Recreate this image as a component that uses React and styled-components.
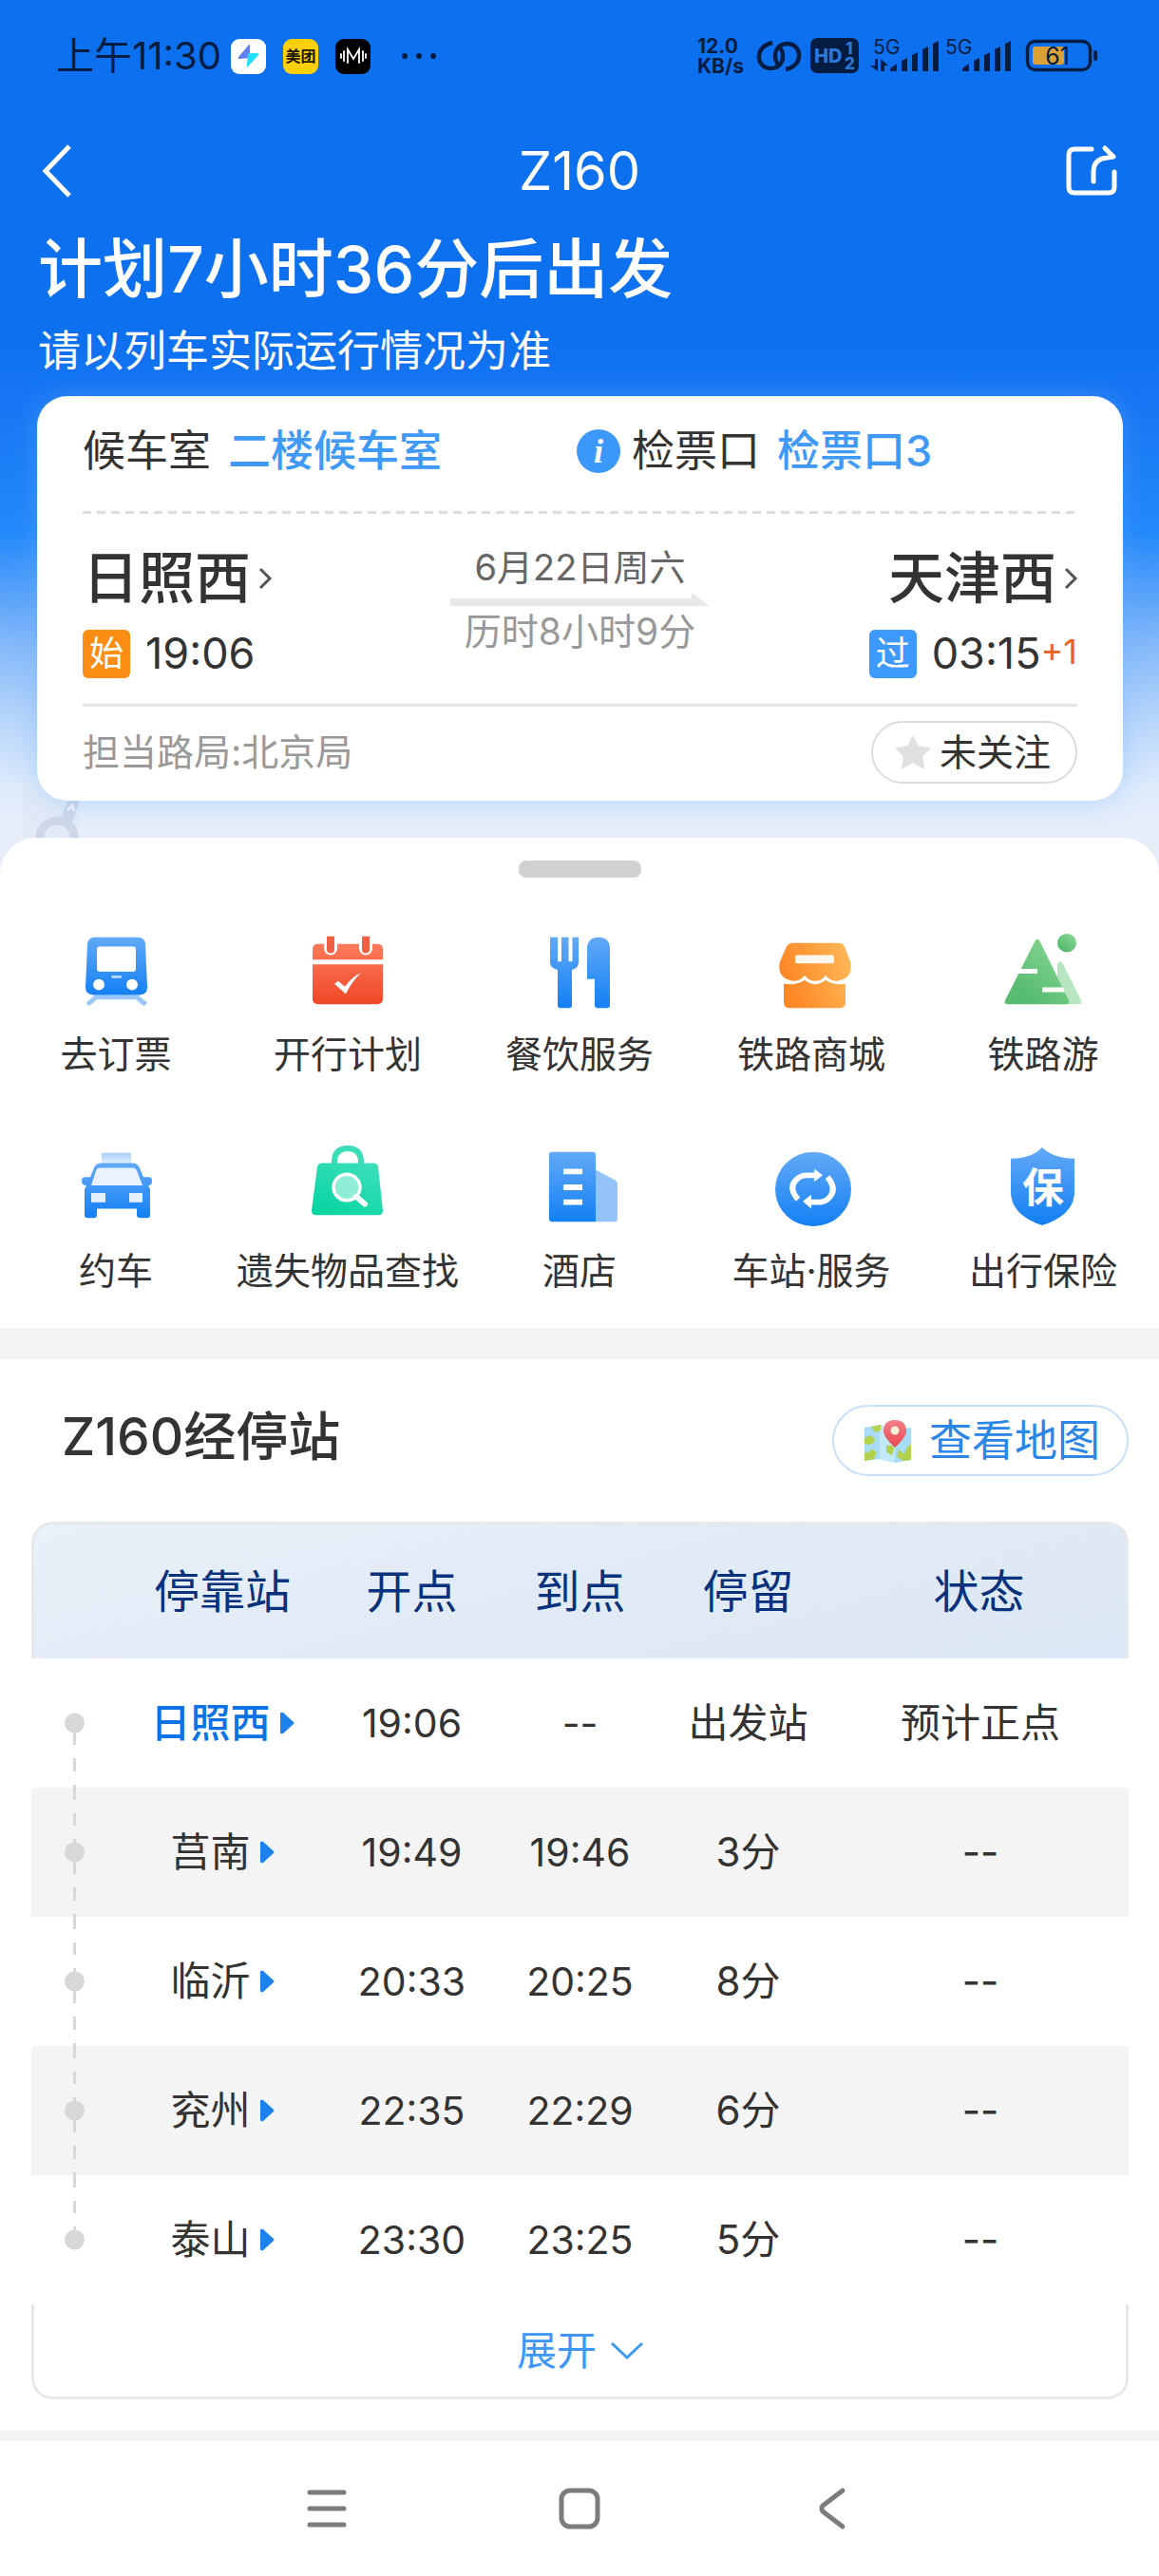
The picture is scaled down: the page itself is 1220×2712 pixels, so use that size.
import React from "react";
import styled, { createGlobalStyle } from "styled-components";

const GlobalStyle = createGlobalStyle`
  *, *::before, *::after { box-sizing: border-box; }
  body {
    margin: 0;
    background: #fff;
    color: #333;
    font-family: Inter, "Noto Sans CJK SC", sans-serif;
  }
  button {
    border: 0;
    padding: 0;
    background: none;
    color: inherit;
    font: inherit;
    cursor: pointer;
  }
  a { color: inherit; text-decoration: none; }
  h1, h2, p { margin: 0; }
  svg { display: block; flex: none; overflow: visible; }
`;

const INK = "#031d42";

/* ---------- status bar ---------- */

const StatusBar = styled.div`
  display: flex;
  align-items: center;
  justify-content: space-between;
  height: 118px;
  padding: 0 65px 0 59px;
  color: ${INK};
`;

const StatusGroup = styled.div`
  display: flex;
  align-items: center;
  gap: ${(p) => p.$gap}px;
`;

const Clock = styled.time`
  font-size: 40px;
  line-height: 48px;
`;

const AppBadge = styled.span`
  display: grid;
  place-items: center;
  width: 37px;
  height: 37px;
  border-radius: 9px;
  background: ${(p) => p.$bg};
  color: #1c1600;
  font-size: 16px;
  line-height: 20px;
  font-weight: 700;
`;

const Speed = styled.div`
  width: 54px;
  font-size: 21px;
  line-height: 21px;
  font-weight: 700;
`;

function LinkIcon() {
  return (
    <svg width="48" height="38" viewBox="796 41 48 38" fill="none" stroke={INK} strokeWidth="4.4">
      <path d="M813 46C793 50 796 73 811 73C820 73 824 67 824 60Q824 54 820 50" />
      <path d="M827 74C847 70 844 47 829 47C820 47 816 53 816 60Q816 66 820 70" />
    </svg>
  );
}

function HdIcon() {
  return (
    <svg width="54" height="38" viewBox="852 41 54 38" fill="#2b78dc" fontWeight="800" fontFamily="Inter, sans-serif">
      <rect x="853" y="41" width="51" height="37" rx="7" fill={INK} />
      <text x="857" y="67" fontSize="20">HD</text>
      <text x="890" y="58" fontSize="17">1</text>
      <text x="889" y="74" fontSize="17">2</text>
    </svg>
  );
}

function Bars() {
  return (
    <g>
      <path d="M937 76V73L944 68V76Z" />
      <path d="M949 76V65L955 62V76Z" />
      <path d="M960 76V59L966 56V76Z" />
      <path d="M971 76V53L977 50V76Z" />
      <path d="M982 76V47L988 44V76Z" />
    </g>
  );
}

function SignalData() {
  return (
    <svg width="74" height="38" viewBox="914 41 74 38" fill={INK} fontFamily="Inter, sans-serif">
      <text x="919" y="58" fontSize="21">5G</text>
      <path d="M921 63h3v13l-8-6h5zM927 76V63l8 7h-4v6z" />
      <Bars />
    </svg>
  );
}

function Signal() {
  return (
    <svg width="68" height="38" viewBox="920 41 68 38" fill={INK} fontFamily="Inter, sans-serif">
      <text x="919" y="58" fontSize="21">5G</text>
      <Bars />
    </svg>
  );
}

function Battery() {
  return (
    <svg width="83" height="38" viewBox="1072 41 83 38">
      <rect x="1081.5" y="44.500" width="66" height="30" rx="8" fill="none" stroke={INK} strokeWidth="3.4" />
      <rect x="1087" y="50" width="33" height="19" rx="3" fill="#dda036" />
      <rect x="1151" y="54" width="4" height="11" rx="2" fill={INK} />
      <text x="1113" y="69" fontSize="25" textAnchor="middle" fill={INK} fontFamily="Inter, sans-serif">61</text>
    </svg>
  );
}

/* ---------- hero ---------- */

const Hero = styled.header`
  position: relative;
  padding-bottom: 77px;
  background: linear-gradient(
    #0d70ef 0, #0d70ef 350px, #1776f3 420px, #2388fa 560px, #7db5f9 670px,
    #b3d3fa 750px, #deebfb 830px, #e8eef9 882px, #e8eef9 920px
  );
`;

const RouteArt = styled.svg`
  position: absolute;
  left: 24px;
  bottom: 38px;
`;

const TitleBar = styled.div`
  display: grid;
  grid-template-columns: 1fr auto 1fr;
  align-items: center;
  height: 124px;
  padding: 0 44px;
  color: #fff;
`;

const PageTitle = styled.h1`
  font-size: 56px;
  line-height: 64px;
  font-weight: 400;
`;

const IconButton = styled.button`
  display: flex;
  justify-self: ${(p) => p.$side};
`;

const Headline = styled.p`
  padding: 0 40px;
  color: #fff;
  font-size: 68px;
  line-height: 82px;
  font-weight: 500;
`;

const Notice = styled.p`
  margin: 16px 0 17px;
  padding: 0 40px;
  color: #fff;
  font-size: 45px;
  line-height: 60px;
`;

const Card = styled.section`
  position: relative;
  margin: 0 38px 0 39px;
  padding: 0 48px;
  border-radius: 32px;
  background: #fff;
  box-shadow: 0 0 26px rgba(110, 175, 255, 0.38);
`;

const WaitRow = styled.div`
  display: grid;
  grid-template-columns: 520fr 527fr;
  padding: 28px 0 33px;
`;

const WaitItem = styled.div`
  display: flex;
  align-items: center;
  gap: 18px;
  font-size: 45px;
  line-height: 60px;
`;

const InfoGate = styled.span`
  display: flex;
  align-items: center;
  gap: 12px;
`;

const BlueLink = styled.a`
  color: #3f99f7;
  font-weight: 500;
`;

const DashRule = styled.div`
  height: 3px;
  background: repeating-linear-gradient(90deg, #ddd 0 9px, transparent 9px 15px);
`;

const Route = styled.div`
  display: grid;
  grid-template-columns: 1fr auto 1fr;
  padding: 33px 0 27px;
  border-bottom: 3px solid #e6e6e6;
`;

const Stop = styled.div`
  display: flex;
  flex-direction: column;
  align-items: ${(p) => p.$align};
  gap: 18px;
`;

const StationName = styled.a`
  display: flex;
  align-items: center;
  gap: 8px;
  font-size: 59px;
  line-height: 70px;
  font-weight: 500;
`;

const StopTime = styled.div`
  display: flex;
  align-items: center;
  height: 52px;
  font-size: 45px;
  line-height: 52px;
`;

const Tag = styled.span`
  width: 50px;
  margin-right: 16px;
  border-radius: 6px;
  background: ${(p) => p.$bg};
  color: #fff;
  font-size: 36px;
  line-height: 51px;
  text-align: center;
`;

const NextDay = styled.span`
  color: #ee5f1b;
  font-size: 36px;
  line-height: 48px;
  align-self: flex-start;
`;

const Middle = styled.div`
  display: flex;
  flex-direction: column;
  align-items: center;
  gap: 4px;
  color: #999;
  font-size: 39px;
  line-height: 46px;
`;

const DateText = styled.span`
  color: #666;
  font-size: 38px;
`;

const CardFoot = styled.div`
  display: flex;
  align-items: center;
  justify-content: space-between;
  padding: 15px 0 18px;
  color: #999;
  font-size: 39px;
  line-height: 46px;
`;

const FollowButton = styled.button`
  display: flex;
  align-items: center;
  gap: 10px;
  height: 66px;
  padding: 0 26px 0 24px;
  border: 2px solid #dcdcdc;
  border-radius: 33px;
  color: #333;
`;

function Chevron() {
  return (
    <svg width="14" height="24" viewBox="0 0 14 24" fill="none" stroke="#555" strokeWidth="3">
      <path d="M2 2L12 12L2 22" />
    </svg>
  );
}

/* ---------- service sheet ---------- */

const Sheet = styled.main`
  position: relative;
  margin-top: -38px;
  border-radius: 38px 38px 0 0;
  background: #fff;
`;

const Handle = styled.div`
  width: 129px;
  height: 18px;
  margin: 0 auto 55px;
  border-radius: 8px;
  background: #d1d1d1;
`;

const Services = styled.nav`
  padding: 24px 0 34px;
`;

const ServiceGrid = styled.div`
  display: grid;
  grid-template-columns: repeat(5, 1fr);
  row-gap: 71px;
`;

const Service = styled.a`
  display: flex;
  flex-direction: column;
  align-items: center;
  gap: 17px;
  font-size: 39px;
  line-height: 52px;
  white-space: nowrap;
`;

const Band = styled.div`
  height: ${(p) => p.$h}px;
  background: #f4f4f4;
`;

function Gradients() {
  return (
    <svg width="0" height="0" style={{ position: "absolute" }} aria-hidden="true">
      <defs>
        <linearGradient id="blue" x1="0" y1="0" x2="0" y2="1">
          <stop offset="0" stopColor="#62a9f7" />
          <stop offset="1" stopColor="#1380f4" />
        </linearGradient>
        <linearGradient id="red" gradientUnits="userSpaceOnUse" x1="0" y1="7" x2="0" y2="80">
          <stop offset="0" stopColor="#fd8162" />
          <stop offset="1" stopColor="#f04828" />
        </linearGradient>
        <linearGradient id="orange" gradientUnits="userSpaceOnUse" x1="20" y1="60" x2="84" y2="40">
          <stop offset="0" stopColor="#ff8726" />
          <stop offset="1" stopColor="#ffb453" />
        </linearGradient>
        <linearGradient id="green" x1="1" y1="0" x2="0.3" y2="0.8">
          <stop offset="0" stopColor="#8fd99a" />
          <stop offset="1" stopColor="#58bd70" />
        </linearGradient>
        <linearGradient id="mint" x1="0.8" y1="0" x2="0.1" y2="1">
          <stop offset="0" stopColor="#3bdfb9" />
          <stop offset="1" stopColor="#04d49f" />
        </linearGradient>
        <linearGradient id="lamp" x1="0" y1="0" x2="0" y2="1">
          <stop offset="0" stopColor="#a9cffa" />
          <stop offset="1" stopColor="#e6f1fe" />
        </linearGradient>
        <linearGradient id="pin" x1="0" y1="0" x2="0" y2="1">
          <stop offset="0" stopColor="#f28189" />
          <stop offset="1" stopColor="#e9464f" />
        </linearGradient>
      </defs>
    </svg>
  );
}

const icons = {
  train: (
    <>
      <path d="M23 70h45l10 8q-2 5-5 3l-7-6H25l-7 6q-4 1-4-3z" fill="#9cc8f9" />
      <path d="M23 8H68Q75 8 76 15L78 62Q78 70 70 70H21Q13 70 13 62L15 15Q16 8 23 8Z" fill="url(#blue)" />
      <rect x="25" y="18" width="41" height="27" rx="3" fill="#fff" />
      <rect x="40" y="49" width="11" height="3" rx="1" fill="#b9dafb" />
      <circle cx="27" cy="59" r="6" fill="#fff" />
      <circle cx="62" cy="59" r="6" fill="#fff" />
    </>
  ),
  calendar: (
    <>
      <path d="M14 15H76Q82 15 82 21V32H8V21Q8 15 14 15Z" fill="url(#red)" />
      <path d="M8 37H82V74Q82 80 76 80H14Q8 80 8 74Z" fill="url(#red)" />
      <path d="M27 7v13M64 7v13" stroke="#fff" strokeWidth="14" strokeLinecap="round" />
      <path d="M23 7h8v14q0 4-4 4t-4-4zM60 7h8v14q0 4-4 4t-4-4z" fill="#f15f43" />
      <path d="M31 58l4-3 7 6q7-10 17-15q-10 10-16 23z" fill="#fff" />
    </>
  ),
  dining: (
    <>
      <path d="M14 8h8v26h4V8h7.500v26h4V8H44v27q0 6-7 8V81q0 3-3 3h-9q-3 0-3-3V43q-8-2-8-8z" fill="url(#blue)" />
      <path d="M53 19Q54 8 65 8T77 19V81q0 3-3 3H64q-3 0-3-3V53h-8z" fill="url(#blue)" />
    </>
  ),
  store: (
    <>
      <path d="M26 14H73Q78 14 80 18L86 34Q90 52 72 55Q65 55 60 49Q55 55 49 55Q43 55 38 49Q33 55 26 55Q8 52 12 34L19 18Q21 14 26 14Z" fill="url(#orange)" />
      <path d="M16 58Q30 60 38 54Q49 63 60 54Q68 60 81 58V78Q81 84 75 84H22Q16 84 16 78Z" fill="url(#orange)" />
      <rect x="28" y="27" width="41" height="9" rx="2" fill="#fff8ee" />
    </>
  ),
  mountain: (
    <>
      <path d="M60 37Q63 31 66 37L85 76Q86 80 82 80H60z" fill="#b7e5c0" />
      <path d="M36 13Q39 7 42 13L72 76Q73 80 69 80H8Q4 80 5 76Z" fill="url(#green)" />
      <circle cx="70" cy="14" r="10" fill="url(#green)" />
      <path d="M18 42H39V47H16zM44 62H66L68 67H44z" fill="#fff" />
    </>
  ),
  taxi: (
    <>
      <rect x="30" y="7" width="31" height="12" rx="1" fill="url(#lamp)" />
      <path d="M30 18H62Q68 18 70 23L74 33H80Q83 33 83 37Q83 42 79 42L81 46V74Q81 77 78 77H71Q67 77 67 74V67H25V74Q25 77 22 77H15Q12 77 12 74V46L14 42Q9 42 9 37Q9 33 12 33H18L22 23Q24 18 30 18Z" fill="url(#blue)" />
      <path d="M28 23H63Q66 23 67 26L73 42H19L24 26Q25 23 28 23Z" fill="#e9f2fe" />
      <path d="M19 50H34V60H19zM59 50H73V60H59z" fill="#e4f0fe" />
    </>
  ),
  bag: (
    <>
      <path d="M31 20V15Q32 2 45 2T59 15V20" fill="none" stroke="#3bdcb6" strokeWidth="6" />
      <path d="M18 18H72Q76 18 77 22L82 69Q82 74 77 74H12Q7 74 7 69L13 22Q14 18 18 18Z" fill="url(#mint)" />
      <circle cx="44" cy="44" r="14" fill="#8feed6" stroke="#fff" strokeWidth="3.500" />
      <path d="M54 54L63 62" stroke="#fff" strokeWidth="6" strokeLinecap="round" />
    </>
  ),
  hotel: (
    <>
      <path d="M62 25L82 36Q85 38 85 40V78Q85 81 82 81H62z" fill="#93c3f9" />
      <path d="M16 6H59Q62 6 62 9V81H16Q13 81 13 78V9Q13 6 16 6Z" fill="url(#blue)" />
      <path d="M28 24H48V30H28zM28 41H48V47H28zM28 57H48V63H28z" fill="#fff" />
    </>
  ),
  refresh: (
    <>
      <circle cx="47" cy="46" r="40" fill="url(#blue)" />
      <path d="M31 57Q20 44 30 35Q34 31 40 31H50" fill="none" stroke="#fff" strokeWidth="6" />
      <path d="M62 33Q73 46 63 56Q59 60 53 60H43" fill="none" stroke="#fff" strokeWidth="6" />
      <path d="M48 24L57 31L48 38zM45 52L36 59L45 67z" fill="#fff" />
    </>
  ),
  shield: (
    <>
      <path d="M44 1Q56 13 78 13V50Q77 74 44 85Q12 74 11 50V13Q33 13 44 1Z" fill="url(#blue)" />
      <text x="45" y="60" textAnchor="middle" fontSize="44" fontWeight="700" fill="#fff" fontFamily='"Noto Sans CJK SC", sans-serif'>保</text>
    </>
  ),
};

const services = [
  ["train", "去订票"],
  ["calendar", "开行计划"],
  ["dining", "餐饮服务"],
  ["store", "铁路商城"],
  ["mountain", "铁路游"],
  ["taxi", "约车"],
  ["bag", "遗失物品查找"],
  ["hotel", "酒店"],
  ["refresh", "车站·服务"],
  ["shield", "出行保险"],
];

/* ---------- timetable ---------- */

const Stops = styled.section`
  padding: 48px 32px 33px 33px;
`;

const StopsHead = styled.div`
  display: flex;
  align-items: flex-start;
  justify-content: space-between;
  margin-bottom: 48px;
  padding-left: 32px;
`;

const StopsTitle = styled.h2`
  font-size: 55px;
  line-height: 66px;
  font-weight: 500;
`;

const MapButton = styled.button`
  display: flex;
  align-items: center;
  gap: 18px;
  height: 75px;
  padding: 0 28px 0 31px;
  border: 2px solid #c8e0fa;
  border-radius: 38px;
  color: #2a86e8;
  font-size: 45px;
  line-height: 60px;
`;

const Table = styled.table`
  display: block;
  font-size: 42px;
  line-height: 50px;

  thead, tbody { display: block; }
`;

const Row = styled.tr`
  display: grid;
  grid-template-columns: 90fr 222fr 177fr 177fr 177fr 312fr;
  align-items: center;
  height: 136px;
  background: ${(p) => (p.$striped ? "#f4f4f4" : "#fff")};
  text-align: center;

  th, td { padding: 0; }
`;

const HeadRow = styled(Row)`
  grid-template-columns: 87fr 222fr 177fr 177fr 177fr 309fr;
  height: 144px;
  border: 3px solid #e6e8ea;
  border-bottom: 0;
  border-radius: 22px 22px 0 0;
  background: linear-gradient(165deg, #e9f0fa, #e1ebf5 50%, #dbe7f4);
  color: #08327d;
  font-size: 48px;

  th { font-weight: 400; }
`;

const StationLink = styled.a`
  display: flex;
  align-items: center;
  justify-content: center;
  gap: 9px;
  color: ${(p) => (p.$current ? "#0b73e6" : "#333")};
  font-weight: ${(p) => (p.$current ? 500 : 400)};
`;

const TimeCell = styled.td`
  font-size: 41px;
`;

const RailCell = styled.td`
  display: flex;
  justify-content: center;
`;

const ExpandButton = styled.button`
  display: flex;
  align-items: center;
  justify-content: center;
  gap: 15px;
  width: 100%;
  height: 100px;
  border: 3px solid #e8e8e8;
  border-top: 0;
  border-radius: 0 0 22px 22px;
  color: #3c97f7;
  font-size: 42px;
  line-height: 50px;
`;

function Rail({ first, last }) {
  return (
    <svg width="21" height="136" viewBox="0 0 21 136" fill="#d8d8d8">
      {!first && <path d="M9 0h3v13h-3zM9 27h3v13h-3zM9 54h3v14h-3z" />}
      {!last && <path d="M9 68h3v23h-3zM9 105h3v14h-3zM9 133h3v3h-3z" />}
      <circle cx="10.500" cy="68" r="10.500" />
    </svg>
  );
}

function MapIcon() {
  return (
    <svg width="51" height="50" viewBox="0 0 51 50">
      <path d="M1 11L17 8L33 13L50 11V45L33 48L17 44L1 46Z" fill="#a6dcf7" />
      <path d="M17 8L33 13V48L17 44Z" fill="#c3e8f8" />
      <path d="M8 10L18 8V14L12 16zM1 22Q8 17 11 22T6 29L1 28zM1 37Q7 38 8 33L14 37L11 44L1 46zM24 30Q32 28 32 34L30 40L24 37zM37 34L43 39Q44 32 50 28V45L42 46L35 42z" fill="#b3d14f" />
      <path d="M33 3Q45 3 45 15Q45 21 33 32Q21 21 21 15Q21 3 33 3Z" fill="url(#pin)" />
      <circle cx="33" cy="14" r="4.500" fill="#f5f1d8" />
    </svg>
  );
}

const stops = [
  ["日照西", "19:06", "--", "出发站", "预计正点"],
  ["莒南", "19:49", "19:46", "3分", "--"],
  ["临沂", "20:33", "20:25", "8分", "--"],
  ["兖州", "22:35", "22:29", "6分", "--"],
  ["泰山", "23:30", "23:25", "5分", "--"],
];

/* ---------- system navigation ---------- */

const SystemNav = styled.footer`
  display: flex;
  justify-content: center;
  height: 142px;
`;

const NavButton = styled.button`
  display: grid;
  place-items: center;
  width: 266px;
`;

export default function App() {
  return (
    <>
      <GlobalStyle />
      <Gradients />
      <Hero>
        <RouteArt width="60" height="60" viewBox="24 822 60 60" fill="none" stroke="#cdd7e9" aria-hidden="true">
          <path d="M24 822H84V882H24Z" fill="#dde5f3" fillOpacity="0.5" stroke="none" />
          <path d="M68 870L84 824" strokeWidth="12" />
          <path d="M42 882A18 18 0 0 1 78 882" strokeWidth="9" />
          <path d="M71 853L76 848L78 854" stroke="#eef3fb" strokeWidth="3" />
        </RouteArt>
        <StatusBar>
          <StatusGroup $gap={10}>
            <Clock>上午11:30</Clock>
            <StatusGroup $gap={18}>
              <AppBadge $bg="#fff">
                <svg width="24" height="26" viewBox="0 0 24 26">
                  <path d="M12 1Q13 0 13 3V15L2 16Q0 16 1 14Z" fill="#637df2" />
                  <path d="M11 10H21Q23 10 22 12L11 24Q9 26 10 22Z" fill="#22e0fb" />
                </svg>
              </AppBadge>
              <AppBadge $bg="#ffd005">美团</AppBadge>
              <AppBadge $bg="#000">
                <svg width="28" height="20" viewBox="0 0 28 20" fill="none" stroke="#fff" strokeWidth="1.800" strokeLinecap="round">
                  <path d="M1 8v4M4 5v10M8 17V3l6 10l6-10v14M24 5v10M27 8v4" />
                </svg>
              </AppBadge>
              <svg width="66" height="8" viewBox="0 0 66 8" fill={INK}>
                <circle cx="18" cy="4" r="3" />
                <circle cx="33" cy="4" r="3" />
                <circle cx="48" cy="4" r="3" />
              </svg>
            </StatusGroup>
          </StatusGroup>
          <StatusGroup $gap={8}>
            <Speed>
              12.0
              <br />
              KB/s
            </Speed>
            <LinkIcon />
            <HdIcon />
            <SignalData />
            <Signal />
            <Battery />
          </StatusGroup>
        </StatusBar>

        <TitleBar>
          <IconButton $side="start" aria-label="返回">
            <svg width="32" height="56" viewBox="0 0 32 56" fill="none" stroke="#fff" strokeWidth="5">
              <path d="M29 2L4 28L29 54" />
            </svg>
          </IconButton>
          <PageTitle>Z160</PageTitle>
          <IconButton $side="end" aria-label="分享">
            <svg width="54" height="56" viewBox="0 0 54 56" fill="none" stroke="#fff" strokeWidth="5" strokeLinecap="round" strokeLinejoin="round">
              <path d="M27 5H9Q3 5 3 11V45Q3 51 9 51H45Q51 51 51 45V29" />
              <path d="M29 39V29Q29 15 44 14L50 13L41 4" />
            </svg>
          </IconButton>
        </TitleBar>

        <Headline>计划7小时36分后出发</Headline>
        <Notice>请以列车实际运行情况为准</Notice>

        <Card>
          <WaitRow>
            <WaitItem>
              候车室<BlueLink href="#hall">二楼候车室</BlueLink>
            </WaitItem>
            <WaitItem>
              <InfoGate>
                <svg width="46" height="46" viewBox="0 0 46 46">
                  <circle cx="23" cy="23" r="23" fill="#3c98fb" />
                  <text x="23" y="35" textAnchor="middle" fontSize="36" fontStyle="italic" fontWeight="700" fill="#fff" fontFamily='"Liberation Serif", serif'>i</text>
                </svg>
                检票口
              </InfoGate>
              <BlueLink href="#gate">检票口3</BlueLink>
            </WaitItem>
          </WaitRow>
          <DashRule />
          <Route>
            <Stop $align="flex-start">
              <StationName href="#from">
                日照西
                <Chevron />
              </StationName>
              <StopTime>
                <Tag $bg="#fb8c14">始</Tag>
                <time>19:06</time>
              </StopTime>
            </Stop>
            <Middle>
              <DateText>6月22日周六</DateText>
              <svg width="273" height="14" viewBox="0 0 273 14" fill="#e8e8e8">
                <path d="M0 6H254V0L273 14H0Z" />
              </svg>
              <span>历时8小时9分</span>
            </Middle>
            <Stop $align="flex-end">
              <StationName href="#to">
                天津西
                <Chevron />
              </StationName>
              <StopTime>
                <Tag $bg="#3d99fb">过</Tag>
                <time>03:15</time>
                <NextDay>+1</NextDay>
              </StopTime>
            </Stop>
          </Route>
          <CardFoot>
            <span>担当路局:北京局</span>
            <FollowButton>
              <svg width="36" height="34" viewBox="0 0 36 34" fill="#e0e0e0" stroke="#e0e0e0" strokeWidth="2" strokeLinejoin="round">
                <path d="M18 1L23 11L35 13L27 21L29 33L18 27L7 33L9 21L1 13L13 11Z" />
              </svg>
              未关注
            </FollowButton>
          </CardFoot>
        </Card>
      </Hero>

      <Sheet>
        <Services>
          <Handle />
          <ServiceGrid>
            {services.map(([icon, label]) => (
              <Service key={label} href={`#${icon}`}>
                <svg width="90" height="88" viewBox="0 0 90 90" preserveAspectRatio="none">{icons[icon]}</svg>
                {label}
              </Service>
            ))}
          </ServiceGrid>
        </Services>
        <Band $h={33} />

        <Stops>
          <StopsHead>
            <StopsTitle>Z160经停站</StopsTitle>
            <MapButton>
              <MapIcon />
              查看地图
            </MapButton>
          </StopsHead>
          <Table>
            <thead>
              <HeadRow>
                <th aria-label="线路" />
                <th>停靠站</th>
                <th>开点</th>
                <th>到点</th>
                <th>停留</th>
                <th>状态</th>
              </HeadRow>
            </thead>
            <tbody>
              {stops.map(([name, depart, arrive, stay, state], i) => (
                <Row key={name} $striped={i % 2 === 1}>
                  <RailCell>
                    <Rail first={i === 0} last={i === stops.length - 1} />
                  </RailCell>
                  <td>
                    <StationLink href={`#stop-${i}`} $current={i === 0}>
                      {name}
                      <svg width="16" height="24" viewBox="0 0 16 24" fill="#1d82ee">
                        <path d="M1 2Q1 0 4 1L15 11Q16 12 15 13L4 23Q1 24 1 22Z" />
                      </svg>
                    </StationLink>
                  </td>
                  <TimeCell>{depart}</TimeCell>
                  <TimeCell>{arrive}</TimeCell>
                  <td>{stay}</td>
                  <td>{state}</td>
                </Row>
              ))}
            </tbody>
          </Table>
          <ExpandButton>
            展开
            <svg width="34" height="18" viewBox="0 0 34 18" fill="none" stroke="#3c97f7" strokeWidth="3">
              <path d="M1 1L17 16L33 1" />
            </svg>
          </ExpandButton>
        </Stops>
        <Band $h={11} />
      </Sheet>

      <SystemNav>
        <NavButton aria-label="最近任务">
          <svg width="42" height="42" viewBox="0 0 42 42" stroke="#7c7c7c" strokeWidth="5" strokeLinecap="round">
            <path d="M3 4H39M3 21H39M3 38H39" />
          </svg>
        </NavButton>
        <NavButton aria-label="主屏幕">
          <svg width="44" height="44" viewBox="0 0 44 44" fill="none" stroke="#7c7c7c" strokeWidth="5">
            <rect x="3" y="3" width="38" height="38" rx="9" />
          </svg>
        </NavButton>
        <NavButton aria-label="返回">
          <svg width="28" height="44" viewBox="0 0 28 44" fill="none" stroke="#7c7c7c" strokeWidth="5" strokeLinecap="round" strokeLinejoin="round">
            <path d="M25 3L4 19Q2 22 4 25L25 41" />
          </svg>
        </NavButton>
      </SystemNav>
    </>
  );
}
